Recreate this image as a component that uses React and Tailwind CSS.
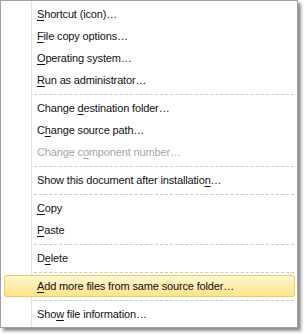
const groups = [
  [
    { pre: '', u: 'S', post: 'hortcut (icon)…' },
    { pre: '', u: 'F', post: 'ile copy options…' },
    { pre: '', u: 'O', post: 'perating system…' },
    { pre: '', u: 'R', post: 'un as administrator…' },
  ],
  [
    { pre: 'Change ', u: 'd', post: 'estination folder…' },
    { pre: 'C', u: 'h', post: 'ange source path…' },
    { pre: 'Change c', u: 'o', post: 'mponent number…', disabled: true },
  ],
  [{ pre: 'Show this document after installatio', u: 'n', post: '…' }],
  [
    { pre: '', u: 'C', post: 'opy' },
    { pre: '', u: 'P', post: 'aste' },
  ],
  [{ pre: 'D', u: 'e', post: 'lete' }],
  [{ pre: '', u: 'A', post: 'dd more files from same source folder…', active: true }],
  [{ pre: 'Sho', u: 'w', post: ' file information…' }],
];

function Item({ item }) {
  return (
    <div
      className={
        'relative flex h-[22px] items-center pl-[36px] ' +
        (item.disabled ? 'text-[#a6a6a6]' : 'text-[#111]')
      }
    >
      {item.active && (
        <div className="absolute inset-y-0 left-[3px] right-[1px] rounded-[2px] border border-[#f2ca58] bg-gradient-to-b from-[#fff6d0] to-[#ffe28c]" />
      )}
      <span className="relative whitespace-nowrap">
        {item.pre}
        <span className="underline underline-offset-[1.5px]">{item.u}</span>
        {item.post}
      </span>
    </div>
  );
}

export default function App() {
  return (
    <div className="h-[334px] w-[306px] bg-white font-['Liberation_Sans',Arial,sans-serif] text-[11px] tracking-[-0.15px]">
      <div className="relative w-[298px] border border-[#a0a0a0] bg-white py-[2px] pr-[1px] shadow-[3px_3px_3px_rgba(0,0,0,0.45)]">
        <div className="absolute bottom-0 left-[30px] top-0 w-px bg-[#e2e2e2]" />
        {groups.map((g, gi) => (
          <div key={gi}>
            {gi > 0 && (
              <div className="flex h-[6px] items-center pl-[33px] pr-[2px]">
                <div className="h-0 w-full border-t border-dashed border-[#c8c8c8]" />
              </div>
            )}
            {g.map((it, i) => (
              <Item key={i} item={it} />
            ))}
          </div>
        ))}
      </div>
    </div>
  );
}
